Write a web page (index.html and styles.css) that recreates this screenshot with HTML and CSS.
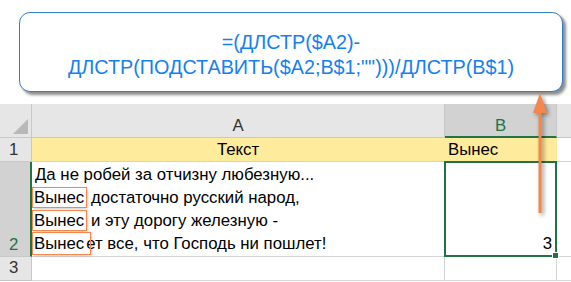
FILE: index.html
```html
<!DOCTYPE html>
<html lang="ru">
<head>
  <meta charset="UTF-8">
  <title>ДЛСТР</title>
  <link rel="stylesheet" href="styles.css">
</head>
<body>
  <div class="callout">
    =(ДЛСТР($A2)-<br>
    ДЛСТР(ПОДСТАВИТЬ($A2;B$1;"")))/ДЛСТР(B$1)
  </div>

  <div class="sheet">
    <div class="corner"><span class="tri"></span></div>
    <div class="colhead">A</div>
    <div class="colhead sel">B</div>
    <div class="colhead rest"></div>

    <div class="rowhead">1</div>
    <div class="cell yellow center">Текст</div>
    <div class="cell yellow">Вынес</div>
    <div class="cell blank"></div>

    <div class="rowhead sel">2</div>
    <div class="cell lines">
      <div>Да не робей за отчизну любезную...</div>
      <div><span class="mark">Вынес</span> достаточно русский народ,</div>
      <div><span class="mark">Вынес</span> и эту дорогу железную -</div>
      <div><span class="mark over">Вынес</span>ет все, что Господь ни пошлет!</div>
    </div>
    <div class="cell active">3<span class="handle"></span></div>
    <div class="cell blank"></div>

    <div class="rowhead top">3</div>
    <div class="cell"></div>
    <div class="cell"></div>
    <div class="cell blank"></div>
  </div>

  <svg class="arrow" width="24" height="130" viewBox="0 0 24 130">
    <line x1="12" y1="18" x2="12" y2="122" stroke="#f4874b" stroke-width="3"/>
    <polygon points="12,2 19,22 5,22" fill="#f4874b"/>
  </svg>
</body>
</html>
```

FILE: styles.css
```css
body {
  margin: 0;
  background: #fff;
  font-family: "Liberation Sans", Arial, sans-serif;
  position: relative;
}

/* формула */
.callout {
  box-sizing: border-box;
  width: 544px;
  height: 80px;
  margin: 12px 0 0 19px;
  padding-top: 17px;
  border: 1px solid #2f7fd0;
  border-radius: 11px;
  background: #fff;
  box-shadow: 3px 3px 3px rgba(0,0,0,0.45);
  color: #1580ee;
  font-size: 19.8px;
  line-height: 25px;
  text-align: center;
}

/* таблица */
.sheet {
  display: grid;
  grid-template-columns: 32px 413px 112px 1fr;
  grid-template-rows: 34px 24px 95px 24px;
  margin-top: 12px;
  font-size: 16.8px;
  color: #000;
}

.corner {
  background: #e6e6e6;
  border-right: 1px solid #c8c8c8;
  border-bottom: 1px solid #c8c8c8;
  position: relative;
}

.tri {
  position: absolute;
  right: 3px;
  bottom: 3px;
  width: 0;
  height: 0;
  border-left: 15px solid transparent;
  border-bottom: 15px solid #b8b8b8;
}

.colhead {
  background: #e6e6e6;
  border-right: 1px solid #c8c8c8;
  border-bottom: 1px solid #c8c8c8;
  display: flex;
  align-items: flex-end;
  justify-content: center;
  padding-bottom: 1px;
  color: #333;
}

.colhead.sel {
  background: #d2d2d2;
  color: #217346;
  border-bottom: 2px solid #217346;
  padding-bottom: 0;
}

.colhead.rest {
  border-right: none;
}

.rowhead {
  background: #e6e6e6;
  border-right: 1px solid #c8c8c8;
  border-bottom: 1px solid #c8c8c8;
  display: flex;
  align-items: flex-end;
  padding: 0 0 1px 9px;
  color: #333;
}

.rowhead.sel {
  background: #d2d2d2;
  color: #217346;
  border-right: 2px solid #217346;
}

.rowhead.top {
  align-items: flex-start;
  padding-top: 1px;
}

.cell {
  border-right: 1px solid #d4d4d4;
  border-bottom: 1px solid #d4d4d4;
  padding: 0 3px;
  display: flex;
  align-items: flex-end;
  white-space: nowrap;
}

.cell.blank {
  border-right: none;
}

.yellow {
  background: #ffeb9c;
  border-right-color: #ffeb9c;
  padding-bottom: 1px;
}

.center {
  justify-content: center;
}

.lines {
  flex-direction: column;
  align-items: flex-start;
  justify-content: flex-end;
  line-height: 23px;
  padding-bottom: 1px;
}

.mark {
  outline: 1px solid #f4874b;
  box-shadow: 1px 1px 3px rgba(0,0,0,0.35);
  margin-left: -2px;
  padding: 0 2px 0 1px;
}

.mark.over {
  padding: 1px 6px 1px 1px;
  margin-right: -4px;
}

.active {
  position: relative;
  justify-content: flex-end;
  border: 2px solid #217346;
  margin: -1px 0 0 -1px;
  padding-bottom: 1px;
}

.handle {
  position: absolute;
  right: -4px;
  bottom: -4px;
  width: 5px;
  height: 5px;
  background: #217346;
  border: 1px solid #fff;
}

.arrow {
  position: absolute;
  left: 528px;
  top: 91px;
  filter: drop-shadow(2px 2px 2px rgba(0,0,0,0.45));
}
```
